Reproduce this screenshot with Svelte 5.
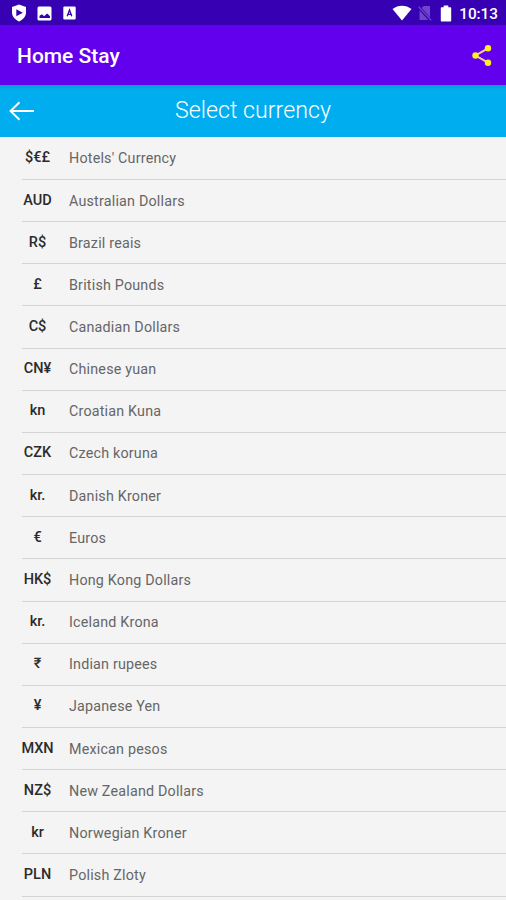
<script lang="ts">
	type Currency = { symbol: string; name: string };

	const currencies: Currency[] = [
		{ symbol: '$€£', name: "Hotels' Currency" },
		{ symbol: 'AUD', name: 'Australian Dollars' },
		{ symbol: 'R$', name: 'Brazil reais' },
		{ symbol: '£', name: 'British Pounds' },
		{ symbol: 'C$', name: 'Canadian Dollars' },
		{ symbol: 'CN¥', name: 'Chinese yuan' },
		{ symbol: 'kn', name: 'Croatian Kuna' },
		{ symbol: 'CZK', name: 'Czech koruna' },
		{ symbol: 'kr.', name: 'Danish Kroner' },
		{ symbol: '€', name: 'Euros' },
		{ symbol: 'HK$', name: 'Hong Kong Dollars' },
		{ symbol: 'kr.', name: 'Iceland Krona' },
		{ symbol: '₹', name: 'Indian rupees' },
		{ symbol: '¥', name: 'Japanese Yen' },
		{ symbol: 'MXN', name: 'Mexican pesos' },
		{ symbol: 'NZ$', name: 'New Zealand Dollars' },
		{ symbol: 'kr', name: 'Norwegian Kroner' },
		{ symbol: 'PLN', name: 'Polish Zloty' },
	];

	let selected = $state<string | null>(null);
</script>

<div class="screen">
	<div class="status-bar">
		<div class="status-group notifications">
			<svg width="16" height="18" viewBox="0 0 16 18">
				<path d="M8 .5 15 3v5.500c0 4-2.800 7-7 9-4.200-2-7-5-7-9V3z" fill="#fff" />
				<path d="M5.300 5.300 11.800 8.800 5.300 12.300z" fill="#3700b3" />
			</svg>
			<svg width="15" height="15" viewBox="0 0 15 15">
				<rect x=".5" y=".5" width="14" height="14" rx="1.500" fill="#fff" />
				<path d="M2.500 12V9.800l2.500-1.600 2 2 3.200-2.700 2.800 2.800V12z" fill="#3700b3" />
			</svg>
			<svg class="keyboard" width="13" height="14" viewBox="0 0 13 14">
				<rect x=".3" y=".5" width="12.400" height="13" rx="1.200" fill="#fff" />
				<path d="M4.200 10.300 6.500 4l2.300 6.300M4.900 8.400h3.200" fill="none" stroke="#3700b3" stroke-width="1.300" />
			</svg>
		</div>
		<div class="status-group">
			<svg width="20" height="16" viewBox="0 0 20 16">
				<path d="M.5 4.100C6-.5 14-.5 19.500 4.100L10 15.500z" fill="#fff" />
			</svg>
			<svg class="no-sim" width="14" height="16" viewBox="0 0 14 16">
				<path d="M5.500 1H12v11.500L3.700 3z M1.500 5.200 10.300 15H1.500z" fill="#6f45c9" />
				<path d="M.7 1.800 13.200 15.400" stroke="#6f45c9" stroke-width="1.300" />
			</svg>
			<svg class="battery" width="12" height="17" viewBox="0 0 12 17">
				<path d="M3.700.5h4.600v1.700h1.900c.6 0 1 .4 1 1v12.300c0 .6-.4 1-1 1H1.800c-.6 0-1-.4-1-1V3.200c0-.6.4-1 1-1h1.900z" fill="#fff" />
			</svg>
			<span class="clock">10:13</span>
		</div>
	</div>

	<header class="app-bar">
		<h1 class="app-title">Home Stay</h1>
		<button class="icon-button" aria-label="Share">
			<svg width="22" height="24" viewBox="0 0 22 24">
				<path d="M17 4.300 4.500 11.500 17 18.700" fill="none" stroke="#f5d08a" stroke-width="2" />
				<g fill="#ffee22">
					<circle cx="17" cy="4.300" r="3.200" />
					<circle cx="4.500" cy="11.500" r="3.200" />
					<circle cx="17" cy="18.700" r="3.200" />
				</g>
			</svg>
		</button>
	</header>

	<div class="toolbar">
		<button class="icon-button" aria-label="Back">
			<svg width="26" height="20" viewBox="0 0 26 20">
				<path d="M10.500 1.200 1.500 10l9 8.800M1.500 10H25" fill="none" stroke="#fff" stroke-width="1.900" />
			</svg>
		</button>
		<h2 class="toolbar-title">Select currency</h2>
	</div>

	<ul class="list">
		{#each currencies as currency}
			<li>
				<button class="row" aria-pressed={selected === currency.name} onclick={() => (selected = currency.name)}>
					<span class="symbol">{currency.symbol}</span>
					<span class="name">{currency.name}</span>
				</button>
			</li>
		{/each}
	</ul>
</div>

<style>
	:global(body) {
		background: #f4f4f4;
	}
	.screen {
		height: 900px;
		overflow: hidden;
		display: flex;
		flex-direction: column;
		background: #f4f4f4;
		font-family: Roboto, 'Liberation Sans', sans-serif;
	}
	.screen > * {
		flex-shrink: 0;
		box-sizing: border-box;
	}
	button {
		border: 0;
		background: none;
		font: inherit;
		color: inherit;
		padding: 0;
	}
	h1,
	h2 {
		margin: 0;
	}
	svg {
		display: block;
	}
	.status-bar {
		height: 25px;
		padding: 1px 8px 0 11px;
		display: flex;
		justify-content: space-between;
		align-items: center;
		background: #3700b3;
	}
	.status-group {
		display: flex;
		align-items: center;
	}
	.notifications {
		gap: 10px;
	}
	.keyboard {
		margin-left: 1px;
	}
	.no-sim {
		margin-left: 6px;
	}
	.battery {
		margin-left: 8px;
	}
	.clock {
		margin-left: 7px;
		padding-top: 1px;
		color: #fff;
		font-size: 15.3px;
		font-weight: 500;
		line-height: 20px;
	}
	.app-bar {
		height: 60px;
		padding: 1px 13px 0 17px;
		display: flex;
		justify-content: space-between;
		align-items: center;
		background: #6200ee;
	}
	.app-title {
		color: #fff;
		font-size: 21px;
		font-weight: 500;
		line-height: 28px;
		padding-top: 1px;
	}
	.toolbar {
		height: 51.8px;
		padding-left: 9px;
		display: grid;
		grid-template-columns: 26px 1fr 35px;
		align-items: center;
		background: linear-gradient(#0a9bdb, #00aeef 5px, #00aeef);
	}
	.toolbar-title {
		color: #fff;
		font-size: 23.2px;
		font-weight: 300;
		line-height: 30px;
		text-align: center;
		padding-bottom: 2px;
	}
	.list {
		margin: 0;
		padding: 0 0 0 22px;
		list-style: none;
		border-top: 1px solid #fcfcfc;
	}
	.row {
		width: 100%;
		height: 42.17px;
		display: flex;
		align-items: center;
		border-bottom: 1px solid #d4d4d4;
		text-align: left;
	}
	.symbol {
		width: 31px;
		margin-right: 16px;
		padding-bottom: 1px;
		display: flex;
		justify-content: center;
		color: #2b2b2b;
		font-size: 14.5px;
		font-weight: 500;
		white-space: nowrap;
	}
	.name {
		color: #666;
		font-size: 14.3px;
		letter-spacing: 0.2px;
	}
</style>
